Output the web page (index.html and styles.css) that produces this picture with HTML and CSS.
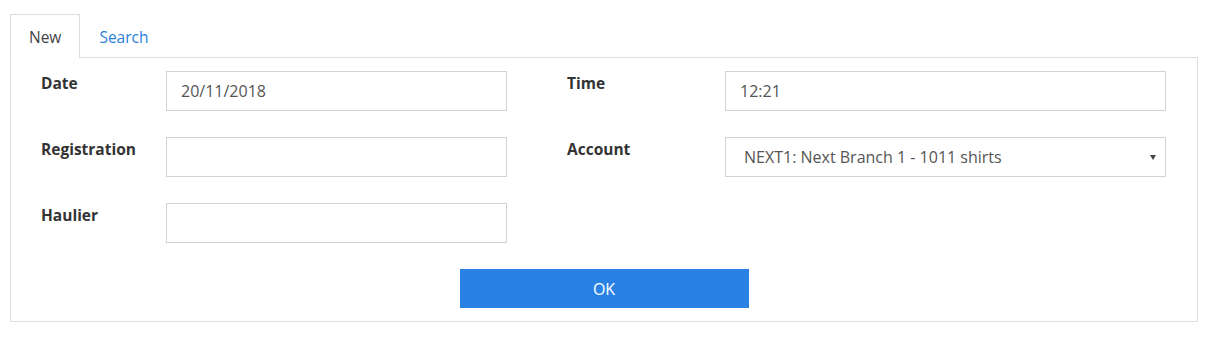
FILE: index.html
```html
<!DOCTYPE html>
<html lang="en">
<head>
  <meta charset="UTF-8" />
  <title>Arrivals</title>
  <link rel="stylesheet" href="styles.css">
</head>
<body>

<ul class="tabs">
  <li class="tab active">New</li>
  <li class="tab">Search</li>
</ul>

<div class="panel">
  <div class="form-grid">
    <label class="lbl">Date</label>
    <input class="field" type="text" value="20/11/2018">
    <label class="lbl lbl-right">Time</label>
    <input class="field" type="text" value="12:21">

    <label class="lbl">Registration</label>
    <input class="field" type="text" value="">
    <label class="lbl lbl-right">Account</label>
    <div class="select">
      <span>NEXT1: Next Branch 1 - 1011 shirts</span>
      <span class="caret"></span>
    </div>

    <label class="lbl">Haulier</label>
    <input class="field" type="text" value="">
  </div>

  <div class="actions">
    <button class="btn">OK</button>
  </div>
</div>

</body>
</html>
```

FILE: styles.css
```css
body {
  margin: 14px 19px 0 10px;
  font-family: "Open Sans", "Noto Sans", Arial, sans-serif;
  background-color: #fff;
  color: #333;
}
.tabs {
  list-style: none;
  margin: 0 0 -1px 0;
  padding: 0;
  display: flex;
}
.tab {
  position: relative;
  z-index: 1;
  padding: 0 18px 0 18px;
  height: 43px;
  line-height: 44px;
  font-size: 15.5px;
  color: #2a7fe0;
  border: 1px solid transparent;
  border-bottom: none;
}
.tab.active {
  color: #444;
  background: #fff;
  border-color: #dcdde0;
}
.panel {
  border: 1px solid #dfdfdf;
  padding: 13px 30px 13px 30px;
}
.form-grid {
  display: grid;
  grid-template-columns: 125px 341px 218px 441px;
  grid-auto-rows: 40px;
  row-gap: 26px;
}
.lbl {
  font-weight: bold;
  font-size: 15.5px;
  padding-top: 1px;
  color: #333;
}
.lbl-right {
  padding-left: 60px;
}
.field, .select {
  box-sizing: border-box;
  height: 40px;
  border: 1px solid #cfd3d8;
  font-family: inherit;
  font-size: 16px;
  color: #555;
  padding: 0 14px;
  outline: none;
}
.select {
  display: flex;
  align-items: center;
  justify-content: space-between;
  padding: 0 9px 0 18px;
}
.caret {
  width: 0;
  height: 0;
  border-left: 3px solid transparent;
  border-right: 3px solid transparent;
  border-top: 5px solid #444;
}
.actions {
  display: flex;
  justify-content: center;
  margin-top: 26px;
}
.btn {
  width: 289px;
  height: 39px;
  border: none;
  background-color: #2982e3;
  color: #fff;
  font-family: inherit;
  font-size: 16px;
  cursor: pointer;
}
```
